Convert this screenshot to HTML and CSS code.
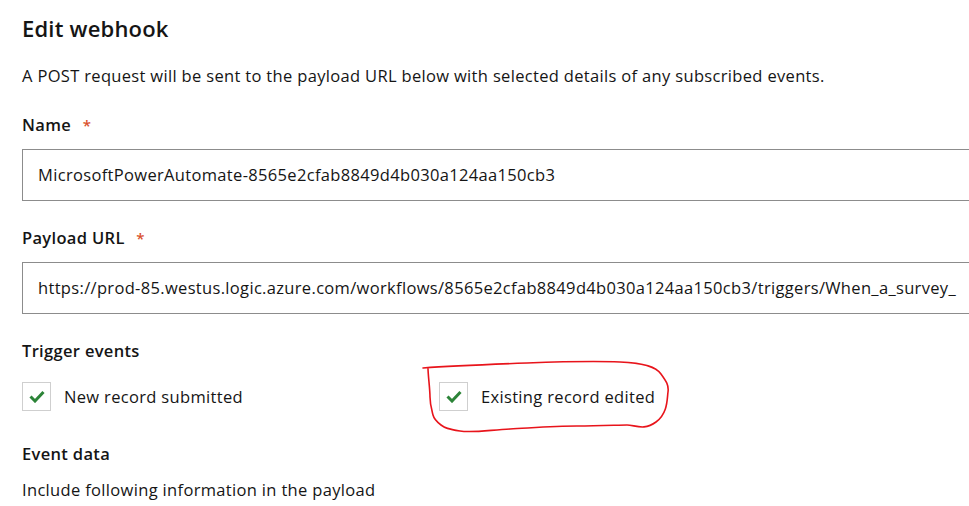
FILE: index.html
```html
<!DOCTYPE html>
<html lang="en">
<head>
<meta charset="utf-8">
<title>Edit webhook</title>
<link rel="stylesheet" href="styles.css">
</head>
<body>
<main class="form">
  <h1 class="title">Edit webhook</h1>
  <p class="desc">A POST request will be sent to the payload URL below with selected details of any subscribed events.</p>

  <div class="field">
    <label class="label">Name <span class="req">*</span></label>
    <div class="input">MicrosoftPowerAutomate-8565e2cfab8849d4b030a124aa150cb3</div>
  </div>

  <div class="field">
    <label class="label">Payload URL <span class="req">*</span></label>
    <div class="input">https://prod-85.westus.logic.azure.com/workflows/8565e2cfab8849d4b030a124aa150cb3/triggers/When_a_survey_</div>
  </div>

  <div class="field">
    <div class="label">Trigger events</div>
    <div class="checks">
      <div class="check">
        <span class="box"><svg width="16" height="13" viewBox="0 0 16 13"><polyline points="1.5,6.5 6,11 14.5,2" fill="none" stroke="#2c8438" stroke-width="3"/></svg></span>
        <span class="check-text">New record submitted</span>
      </div>
      <div class="check">
        <span class="box"><svg width="16" height="13" viewBox="0 0 16 13"><polyline points="1.5,6.5 6,11 14.5,2" fill="none" stroke="#2c8438" stroke-width="3"/></svg></span>
        <span class="check-text">Existing record edited</span>
      </div>
    </div>
  </div>

  <div class="field event">
    <div class="label">Event data</div>
    <p class="hint">Include following information in the payload</p>
  </div>

  <svg class="scribble" width="255" height="82" viewBox="0 0 255 82">
    <path d="M3,13 C30,11 80,9 107,8 S175,6 200,7 S236,12 241,19 S249,30 248,37 S248,58 236,67 S215,70 207,70 S180,71 157,71 S110,73 90,74 S52,78 40,76 S25,73 21,70 S14,64 13,60 S10,50 10,42 S8,20 8,13" fill="none" stroke="#e8141b" stroke-width="1.6" stroke-linecap="round"/>
  </svg>
</main>
</body>
</html>
```

FILE: styles.css
```css
html, body {
  margin: 0;
  padding: 0;
  background: #ffffff;
  overflow: hidden;
}

body {
  font-family: "Open Sans", Lato, sans-serif;
  color: #151515;
  font-size: 16.5px;
  letter-spacing: 0.33px;
}

.form {
  position: relative;
  width: 1000px;
  padding-left: 22px;
  padding-top: 14px;
  box-sizing: border-box;
}

.title {
  margin: 0;
  font-size: 22px;
  line-height: 28px;
  font-weight: 600;
  letter-spacing: 0.2px;
}

.desc {
  margin: 22px 0 0;
  line-height: 24px;
}

.field {
  margin-top: 25px;
}

.label {
  display: block;
  font-weight: 600;
  line-height: 24px;
}

.req {
  color: #d9512c;
  margin-left: 7px;
  font-size: 15px;
}

.input {
  margin-top: 12px;
  height: 50px;
  border: 1px solid #8c8c8c;
  border-right: none;
  box-sizing: content-box;
  padding: 0 15px;
  line-height: 50px;
  white-space: nowrap;
  overflow: hidden;
}

.checks {
  display: grid;
  grid-template-columns: 417px auto;
  margin-top: 19px;
}

.check {
  display: flex;
  align-items: center;
  gap: 13px;
}

.box {
  width: 27px;
  height: 27px;
  border: 1px solid #cfcfcf;
  display: flex;
  align-items: center;
  justify-content: center;
}

.check-text {
  line-height: 24px;
}

.event {
  margin-top: 31px;
}

.hint {
  margin: 12px 0 0;
  line-height: 24px;
}

.scribble {
  position: absolute;
  left: 420px;
  top: 355px;
}
```
